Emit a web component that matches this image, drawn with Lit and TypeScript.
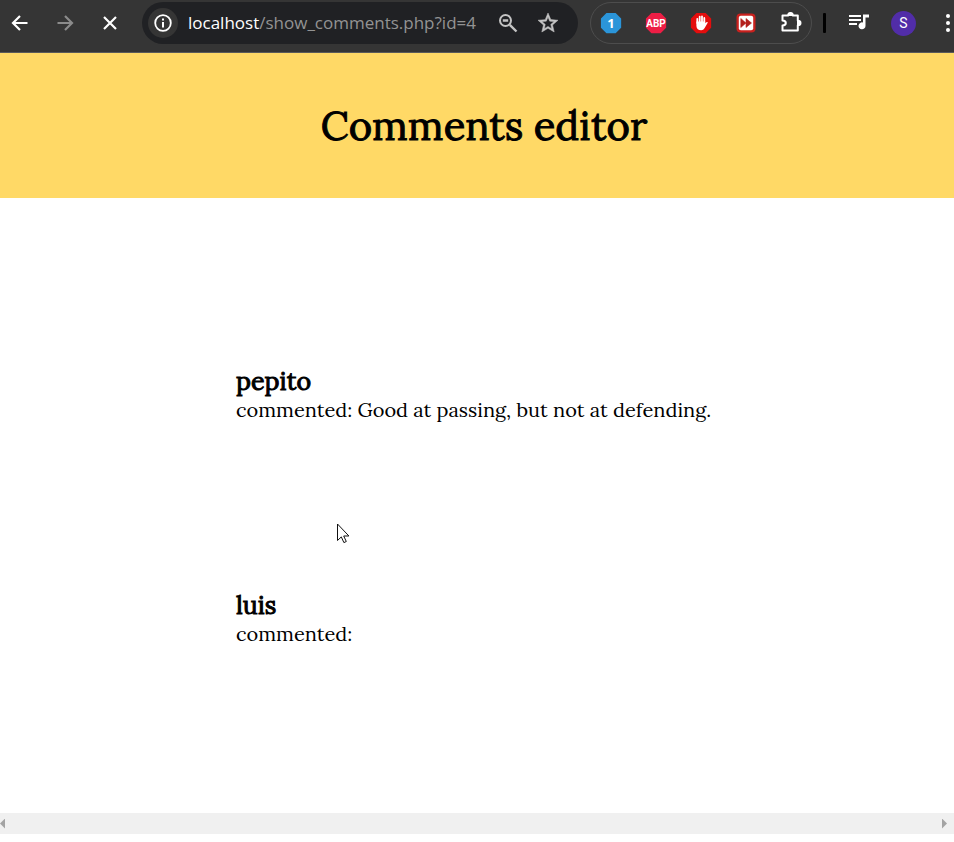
import { LitElement, html, css, svg } from "lit";
import { customElement, property } from "lit/decorators.js";

const OCTAGON = "M7 1h10l6 6v10l-6 6H7l-6-6V7z";

@customElement("browser-toolbar")
class BrowserToolbar extends LitElement {
  static styles = css`
    :host {
      display: block;
      background: #353535;
      border-bottom: 1px solid #5a5a5a;
      overflow: hidden;
    }
    .bar {
      display: flex;
      align-items: center;
      height: 42px;
      padding: 2px 1px 8px 0;
    }
    button {
      display: flex;
      align-items: center;
      justify-content: center;
      flex: none;
      width: 24px;
      height: 24px;
      padding: 0;
      border: 0;
      background: none;
      color: #fff;
    }
    svg {
      display: block;
      flex: none;
      overflow: visible;
    }
    .nav {
      display: flex;
      gap: 5px;
      margin-right: 12px;
    }
    .nav button {
      width: 40px;
    }
    .nav button:disabled {
      color: #8b8b8b;
    }
    .address {
      display: flex;
      align-items: center;
      flex: 1;
      min-width: 0;
      height: 42px;
      box-sizing: border-box;
      padding: 0 18px 0 6px;
      border-radius: 21px;
      background: #202124;
    }
    .address .info {
      width: 30px;
      height: 30px;
      border-radius: 50%;
      background: #353535;
    }
    .url {
      flex: 1;
      min-width: 0;
      margin-left: 10px;
      overflow: hidden;
      white-space: nowrap;
      font: 17px/24px "Open Sans", "Noto Sans", sans-serif;
      color: #939393;
      outline: none;
    }
    .host {
      color: #fff;
    }
    .tools {
      display: flex;
      gap: 16px;
    }
    .tools button {
      color: #c4c4c4;
    }
    .extensions {
      display: flex;
      align-items: center;
      gap: 21px;
      height: 42px;
      box-sizing: border-box;
      margin-left: 12px;
      padding: 0 8px;
      border: 1px solid #4d4d4d;
      border-radius: 21px;
    }
    .divider {
      width: 3px;
      height: 20px;
      margin: 0 21px 0 11px;
      border-radius: 1px;
      background: #000;
    }
    .end {
      display: flex;
      align-items: center;
      gap: 20px;
    }
    .end .avatar {
      width: 25px;
      height: 25px;
      border-radius: 50%;
      background: #512da8;
      font: 14px/24px Roboto, sans-serif;
    }
    .end .menu {
      width: 24px;
      margin-right: -7px;
    }
    .badge {
      font: 700 13px "Open Sans", sans-serif;
      fill: #fff;
      text-anchor: middle;
    }
    .small {
      font: 700 10px Roboto, sans-serif;
    }
  `;

  icon(body: unknown, size = 24) {
    return html`<svg width=${size} height=${size} viewBox="0 0 24 24" fill="none" aria-hidden="true">${body}</svg>`;
  }

  render() {
    return html`
      <div class="bar">
        <nav class="nav">
          <button aria-label="Back">
            ${this.icon(svg`<path d="M19.500 12H5.500M12 5l-7 7 7 7" stroke="currentColor" stroke-width="2.200"/>`)}
          </button>
          <button aria-label="Forward" disabled>
            ${this.icon(svg`<path d="M4.500 12h14M12 5l7 7-7 7" stroke="currentColor" stroke-width="2.200"/>`)}
          </button>
          <button aria-label="Stop">
            ${this.icon(svg`<path d="M6 6l12 12M18 6L6 18" stroke="currentColor" stroke-width="2.200"/>`)}
          </button>
        </nav>
        <div class="address">
          <button class="info" aria-label="Site information">
            ${this.icon(svg`<circle cx="12" cy="12" r="7.800" stroke="currentColor" stroke-width="1.800"/><path d="M11 7.500h2v2h-2zM11 11h2v5.500h-2z" fill="currentColor"/>`)}
          </button>
          <div class="url" role="textbox" aria-label="Address" contenteditable="true" spellcheck="false"><span class="host">localhost</span>/show_comments.php?id=4</div>
          <div class="tools">
            <button aria-label="Zoom">
              ${this.icon(svg`<circle cx="9.500" cy="9.500" r="5.500" stroke="currentColor" stroke-width="2"/><path d="M6.800 9.500h5.400M13.800 13.800l6.700 6.700" stroke="currentColor" stroke-width="2.400"/>`)}
            </button>
            <button aria-label="Bookmark this page">
              ${this.icon(svg`<path d="M22 9.240l-7.190-.620L12 2 9.190 8.630 2 9.240l5.460 4.730L5.820 21 12 17.270 18.180 21l-1.630-7.030L22 9.240zM12 15.400l-3.760 2.270 1-4.280-3.320-2.880 4.380-.380L12 6.100l1.710 4.040 4.380.380-3.320 2.880 1 4.280L12 15.400z" fill="currentColor" stroke="currentColor" stroke-width=".5"/>`)}
            </button>
          </div>
        </div>
        <div class="extensions">
          <button aria-label="Extension with 1 notice">
            ${this.icon(svg`<path d=${OCTAGON} fill="#2b95d9" transform="translate(1 1) scale(.92)"/><text class="badge" x="12" y="17">1</text>`)}
          </button>
          <button aria-label="Adblock Plus">
            ${this.icon(svg`<path d=${OCTAGON} fill="#ed1e45" transform="translate(1 1) scale(.92)"/><text class="badge small" x="12" y="16">ABP</text>`)}
          </button>
          <button aria-label="AdBlock">
            ${this.icon(svg`<path d=${OCTAGON} fill="#e40d0d" transform="translate(1 1) scale(.92)"/><path d="M8.300 12V7.800M10.700 11V5.700M13 11V5.300M15.300 12V7" stroke="#fff" stroke-width="1.800" stroke-linecap="round"/><path d="M7.400 10.500h8.800v1.800l1.600-1.300q1.100-.300.900.700l-3.200 5.600q-1 2-3.300 2-4.400 0-4.800-4.300z" fill="#fff"/>`)}
          </button>
          <button aria-label="Fast forward">
            ${this.icon(svg`<rect x="2.500" y="2.500" width="19" height="19" rx="4" fill="#c9211e"/><rect x="4.800" y="4.800" width="14.400" height="14.400" rx="2" fill="#fff"/><path d="M6.800 7.500l5.200 4.500-5.200 4.500zM12 7.500l5.500 4.500-5.500 4.500z" fill="#b3201c" stroke="#b3201c" stroke-width=".6"/>`)}
          </button>
          <button aria-label="Extensions">
            ${this.icon(svg`<path d="M3.500 4.500h5.700q-.200-2.500 2.300-2.500t2.300 2.500h5v5.200q2.700-.100 2.700 2.300t-2.700 2.300v5.200H3.500v-5q3.300-.300 3.300-2.500T3.500 9.500z" stroke="currentColor" stroke-width="2" stroke-linejoin="round"/><path d="M9 5q0-3.500 2.500-3.500t2.500 3.500zM18 9.500q4 0 4 2.500t-4 2.500z" fill="currentColor"/>`)}
          </button>
        </div>
        <div class="divider"></div>
        <div class="end">
          <button aria-label="Media controls">
            ${this.icon(svg`<path d="M2 4h12v2H2zM2 8h12v2H2zM2 12h8v2H2zM16 3.500h6v3h-3.500v8.200a3.500 3.500 0 1 1-2.500-3.200z" fill="currentColor"/>`)}
          </button>
          <button class="avatar" aria-label="Profile">S</button>
          <button class="menu" aria-label="Menu">
            ${this.icon(svg`<circle cx="12" cy="5" r="2" fill="currentColor"/><circle cx="12" cy="12" r="2" fill="currentColor"/><circle cx="12" cy="19" r="2" fill="currentColor"/>`)}
          </button>
        </div>
      </div>
    `;
  }
}

@customElement("user-comment")
class UserComment extends LitElement {
  @property() author = "";
  @property() text = "";

  static styles = css`
    :host {
      display: block;
      color: #000;
    }
    h2 {
      margin: 0;
      font-size: 25px;
      line-height: 32px;
      font-weight: 400;
      -webkit-text-stroke: 1px #000;
    }
    p {
      margin: 0;
      font-size: 20px;
      line-height: 26px;
    }
  `;

  render() {
    return html`<h2>${this.author}</h2><p>commented: ${this.text}</p>`;
  }
}

@customElement("app-root")
class AppRoot extends LitElement {
  comments = [
    { author: "pepito", text: "Good at passing, but not at defending." },
    { author: "luis", text: "" },
  ];

  static styles = css`
    :host {
      display: block;
      position: relative;
      min-height: 100vh;
      background: #fff;
      font-family: Lora, "Liberation Serif", serif;
    }
    header {
      padding: 45px 0 44px 14px;
      background: #ffd966;
      text-align: center;
    }
    h1 {
      margin: 0;
      font-size: 40px;
      line-height: 56px;
      font-weight: 400;
      -webkit-text-stroke: 1px #000;
    }
    main {
      display: flex;
      flex-direction: column;
      align-items: center;
      gap: 166px;
      padding: 167px 0 166px 14px;
    }
    user-comment {
      width: 100%;
      max-width: 496px;
    }
    .scrollbar {
      display: flex;
      align-items: center;
      justify-content: space-between;
      height: 21px;
      padding-right: 7px;
      background: #f0f0f0;
    }
    .scrollbar button {
      width: 5px;
      height: 10px;
      padding: 0;
      border: 0;
      background: #a3a3a3;
      clip-path: polygon(0 0, 100% 50%, 0 100%);
    }
    .scrollbar .left {
      clip-path: polygon(100% 0, 0 50%, 100% 100%);
    }
    .pointer {
      position: absolute;
      left: 337px;
      top: 523px;
    }
  `;

  render() {
    return html`
      <browser-toolbar></browser-toolbar>
      <header><h1>Comments editor</h1></header>
      <main>
        ${this.comments.map((c) => html`<user-comment .author=${c.author} .text=${c.text}></user-comment>`)}
      </main>
      <div class="scrollbar">
        <button class="left" aria-label="Scroll left"></button>
        <button aria-label="Scroll right"></button>
      </div>
      <svg class="pointer" width="13" height="21" viewBox="0 0 13 21" aria-hidden="true">
        <path d="M.5 1v16.500l3.800-3.600 2.600 5.700 2.400-1.100-2.600-5.500h5.200z" fill="#fff" stroke="#111" />
      </svg>
    `;
  }
}
